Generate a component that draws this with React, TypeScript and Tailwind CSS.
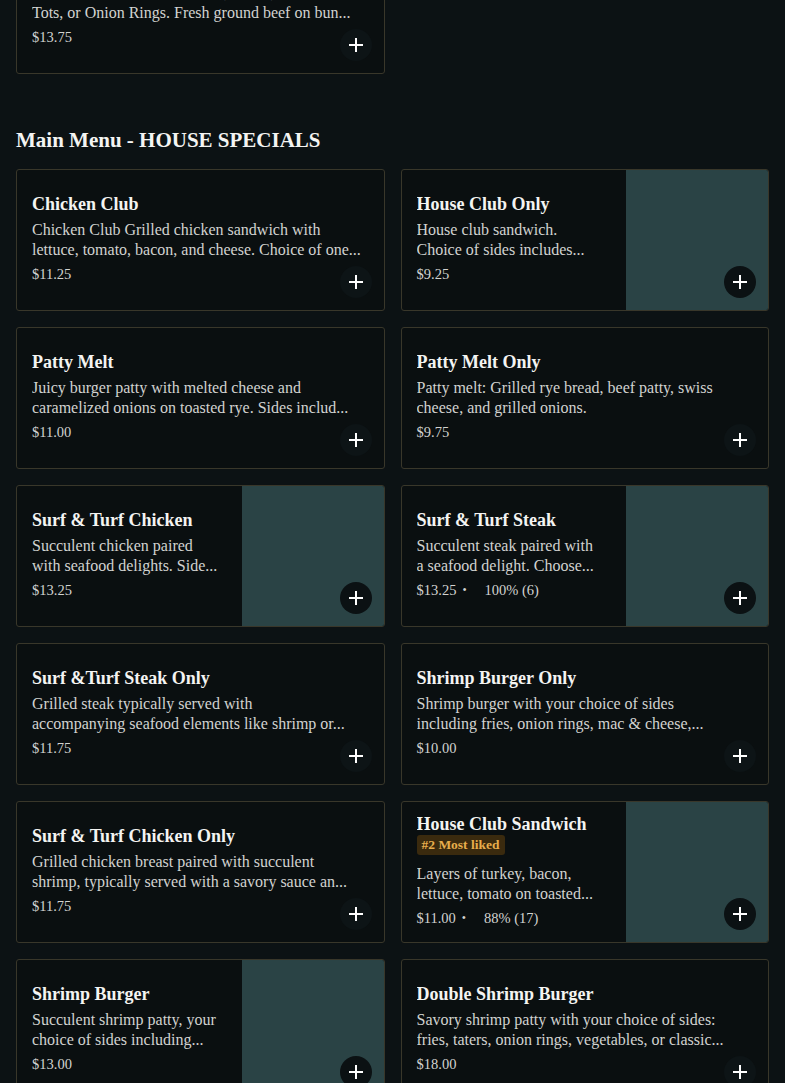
import React from "react";

interface MenuItem {
  title: string;
  lines: [string, string];
  price: string;
  image?: boolean;
  rating?: string;
  badge?: string;
}

const items: MenuItem[] = [
  {
    title: "Chicken Club",
    lines: ["Chicken Club Grilled chicken sandwich with", "lettuce, tomato, bacon, and cheese. Choice of one..."],
    price: "$11.25",
  },
  {
    title: "House Club Only",
    lines: ["House club sandwich.", "Choice of sides includes..."],
    price: "$9.25",
    image: true,
  },
  {
    title: "Patty Melt",
    lines: ["Juicy burger patty with melted cheese and", "caramelized onions on toasted rye. Sides includ..."],
    price: "$11.00",
  },
  {
    title: "Patty Melt Only",
    lines: ["Patty melt: Grilled rye bread, beef patty, swiss", "cheese, and grilled onions."],
    price: "$9.75",
  },
  {
    title: "Surf & Turf Chicken",
    lines: ["Succulent chicken paired", "with seafood delights. Side..."],
    price: "$13.25",
    image: true,
  },
  {
    title: "Surf & Turf Steak",
    lines: ["Succulent steak paired with", "a seafood delight. Choose..."],
    price: "$13.25",
    image: true,
    rating: "100% (6)",
  },
  {
    title: "Surf &Turf Steak Only",
    lines: ["Grilled steak typically served with", "accompanying seafood elements like shrimp or..."],
    price: "$11.75",
  },
  {
    title: "Shrimp Burger Only",
    lines: ["Shrimp burger with your choice of sides", "including fries, onion rings, mac & cheese,..."],
    price: "$10.00",
  },
  {
    title: "Surf & Turf Chicken Only",
    lines: ["Grilled chicken breast paired with succulent", "shrimp, typically served with a savory sauce an..."],
    price: "$11.75",
  },
  {
    title: "House Club Sandwich",
    lines: ["Layers of turkey, bacon,", "lettuce, tomato on toasted..."],
    price: "$11.00",
    image: true,
    rating: "88% (17)",
    badge: "#2 Most liked",
  },
  {
    title: "Shrimp Burger",
    lines: ["Succulent shrimp patty, your", "choice of sides including..."],
    price: "$13.00",
    image: true,
  },
  {
    title: "Double Shrimp Burger",
    lines: ["Savory shrimp patty with your choice of sides:", "fries, taters, onion rings, vegetables, or classic..."],
    price: "$18.00",
  },
];

const PlusIcon = () => (
  <svg width="16" height="16" viewBox="0 0 16 16" fill="none">
    <path d="M8 1v14M1 8h14" stroke="#ffffff" strokeWidth="2" />
  </svg>
);

const MenuCard: React.FC<{ item: MenuItem }> = ({ item }) => {
  return (
    <div className="relative flex h-[142px] overflow-hidden rounded-[3px] border border-[#39372a] bg-[#0a0f10]">
      <div className="flex min-w-0 flex-1 flex-col justify-center pl-[15px] pr-4 pt-[10px] pb-[14px]">
        <h3 className="truncate text-[18px] font-bold leading-6 text-[#f4f4f2]">{item.title}</h3>
        {item.badge && (
          <div className="mb-1">
            <span className="inline-block rounded-[3px] bg-[#3a2a0e] px-[5px] text-[13.5px] leading-5 font-bold text-[#e6ad4c]">
              {item.badge}
            </span>
          </div>
        )}
        <div className="mt-1 text-[16px] leading-5 text-[#d2d3d0]">
          <p className="truncate">{item.lines[0]}</p>
          <p className="truncate">{item.lines[1]}</p>
        </div>
        <div className="mt-1 flex items-center text-[14.5px] leading-5 text-[#d2d3d0]">
          <span>{item.price}</span>
          {item.rating && (
            <>
              <span className="ml-1.5 text-[12px]">•</span>
              <span className="w-[18px]" />
              <span>{item.rating}</span>
            </>
          )}
        </div>
      </div>
      {item.image && <div className="w-[142px] shrink-0 bg-[#2a4345]" />}
      <button
        className={`absolute right-3 bottom-3 flex h-8 w-8 items-center justify-center rounded-full ${
          item.image ? "bg-[#0b1113]" : "bg-[#0d1416]"
        }`}
      >
        <PlusIcon />
      </button>
    </div>
  );
};

export default function App() {
  return (
    <div
      className="h-[1083px] overflow-hidden bg-[#0c1214] px-4"
      style={{ fontFamily: '"Liberation Serif", "DejaVu Serif", serif' }}
    >
      <div className="grid grid-cols-2 gap-4 -mt-[68px]">
        <MenuCard
          item={{
            title: "Cheeseburger",
            lines: ["Choice of sides includes Fries, Taters, Tater", "Tots, or Onion Rings. Fresh ground beef on bun..."],
            price: "$13.75",
          }}
        />
      </div>
      <h2 className="mt-[52px] mb-[15px] text-[21px] font-bold leading-7 text-[#f4f4f2]">
        Main Menu - HOUSE SPECIALS
      </h2>
      <div className="grid grid-cols-2 gap-4">
        {items.map((item) => (
          <MenuCard key={item.title} item={item} />
        ))}
      </div>
    </div>
  );
}
